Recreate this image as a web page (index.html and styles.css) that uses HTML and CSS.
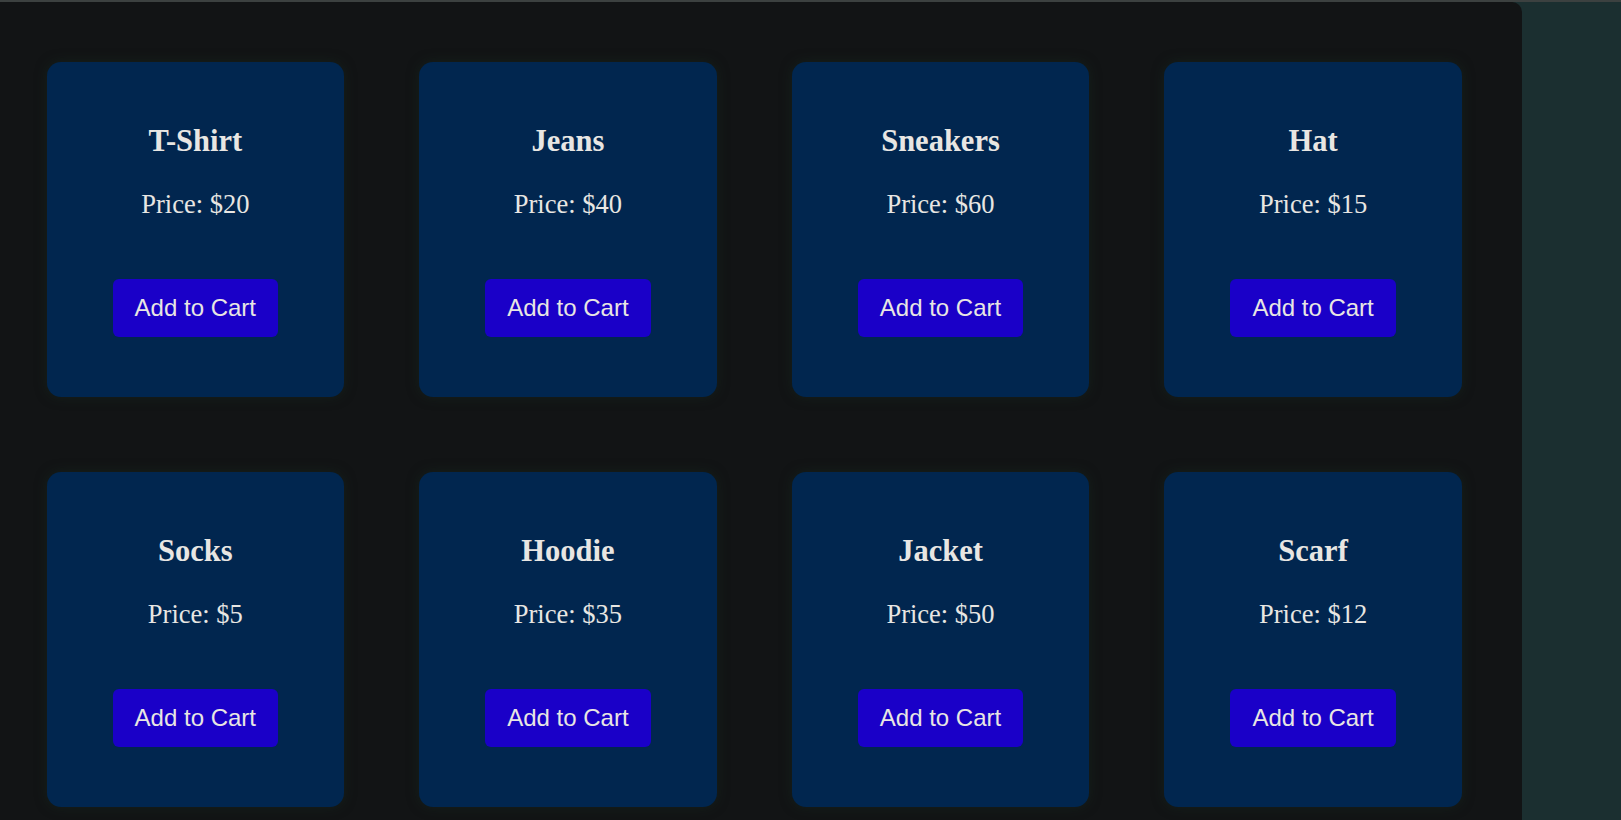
FILE: index.html
```html
<!DOCTYPE html>
<html>
<head>
<meta charset="utf-8">
<link rel="stylesheet" href="styles.css">
</head>
<body>
<div class="topbar"></div>
<div class="panel">
  <div class="card"><h3 class="title">T-Shirt</h3><p class="price">Price: $20</p><button class="btn">Add to Cart</button></div>
  <div class="card"><h3 class="title">Jeans</h3><p class="price">Price: $40</p><button class="btn">Add to Cart</button></div>
  <div class="card"><h3 class="title">Sneakers</h3><p class="price">Price: $60</p><button class="btn">Add to Cart</button></div>
  <div class="card"><h3 class="title">Hat</h3><p class="price">Price: $15</p><button class="btn">Add to Cart</button></div>
  <div class="card"><h3 class="title">Socks</h3><p class="price">Price: $5</p><button class="btn">Add to Cart</button></div>
  <div class="card"><h3 class="title">Hoodie</h3><p class="price">Price: $35</p><button class="btn">Add to Cart</button></div>
  <div class="card"><h3 class="title">Jacket</h3><p class="price">Price: $50</p><button class="btn">Add to Cart</button></div>
  <div class="card"><h3 class="title">Scarf</h3><p class="price">Price: $12</p><button class="btn">Add to Cart</button></div>
</div>
</body>
</html>
```
FILE: styles.css
```css
html, body {
  margin: 0;
  padding: 0;
  background: #1b2f30;
  overflow: hidden;
  height: 820px;
}
body {
  font-family: "Liberation Serif", "Times New Roman", serif;
  color: #e8e6e3;
}
.topbar {
  height: 2px;
  background: #3c4140;
}
.panel {
  width: 1522px;
  box-sizing: border-box;
  background: #121415;
  border-top-right-radius: 10px;
  padding: 60px 60px 40px 46.5px;
  display: grid;
  grid-template-columns: repeat(4, 297.6px);
  column-gap: 75px;
  row-gap: 75px;
}
.card {
  height: 335px;
  border-radius: 14px;
  background: #01264f;
  box-shadow: 0 0 12px rgba(24, 40, 32, 0.6);
  display: flex;
  flex-direction: column;
  align-items: center;
  padding-top: 61px;
  box-sizing: border-box;
}
.title {
  margin: 0;
  font-size: 30.5px;
  line-height: 36px;
  font-weight: bold;
}
.price {
  margin: 29px 0 0;
  font-size: 26.5px;
  line-height: 32px;
}
.btn {
  margin-top: 59px;
  font-family: "Liberation Sans", Arial, sans-serif;
  font-size: 24px;
  line-height: 28px;
  padding: 15px 22px;
  border: none;
  border-radius: 6px;
  background: #1a00c8;
  color: #e8e6e3;
}
```
